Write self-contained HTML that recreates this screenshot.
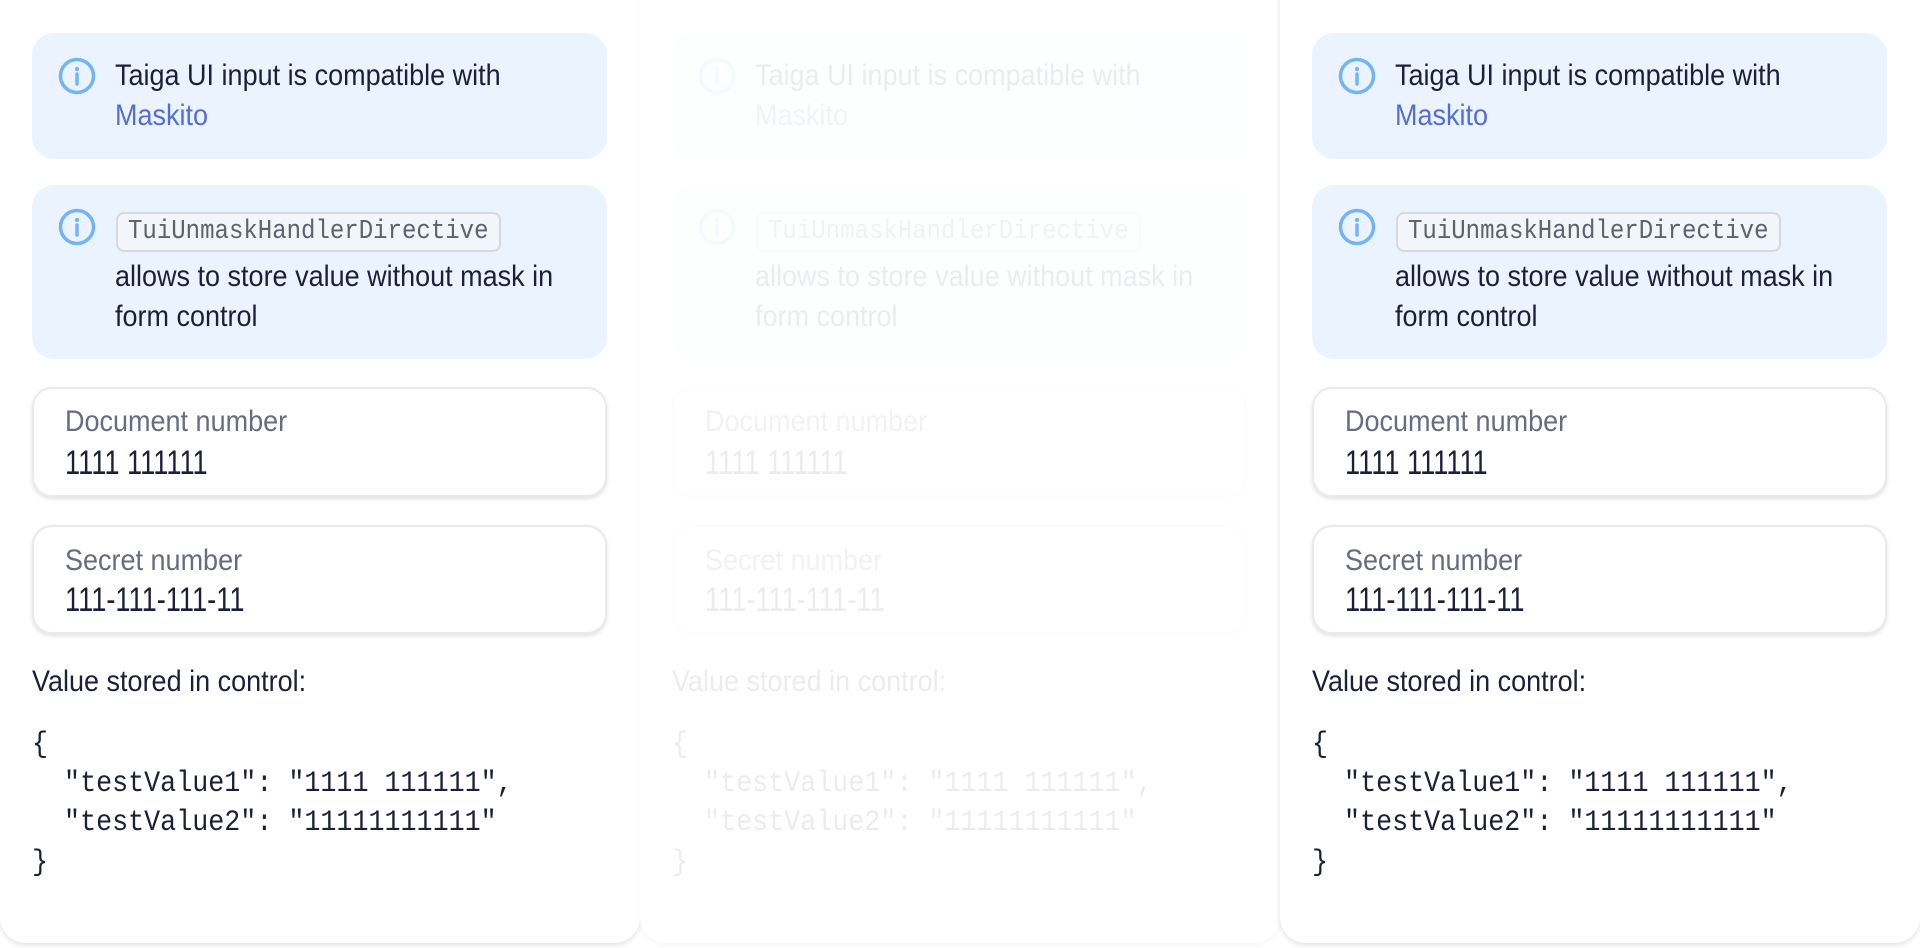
<!DOCTYPE html>
<html><head><meta charset="utf-8"><style>
*{margin:0;padding:0;box-sizing:border-box}
html,body{width:1920px;height:948px;background:#fff;overflow:hidden;font-family:"Liberation Sans",sans-serif;color:#1b1f3b}
.col{position:absolute;top:-30px;width:640px;height:973px;background:#fff;border-radius:26px;box-shadow:0 2px 6px rgba(0,0,0,.12)}
.c{position:absolute;left:0;top:0;width:640px;height:948px}
.n{position:absolute;left:32px;width:575px;background:#ebf4fe;border-radius:22px}
.t{position:absolute;white-space:nowrap;font-size:30px;line-height:40px;height:40px;transform:scaleX(.9);transform-origin:0 50%}
.ic{position:absolute;left:58px;width:38px;height:38px}
.inp{position:absolute;left:32px;width:575px;background:#fff;border:2px solid #e9eaee;border-radius:20px;box-shadow:0 2px 4px rgba(0,0,0,.12)}
.lab{color:#696b80}
.val{font-size:34px;transform:scaleX(.8)}
.m{position:absolute;white-space:pre;font-family:"Liberation Mono",monospace;font-size:30px;line-height:40px;height:40px;transform:scaleX(.89);transform-origin:0 50%}
.chip{position:absolute;left:116px;top:212px;width:385px;height:40px;border:2px solid #d5d9e2;border-radius:8px;background:#f2f5f9}
.chip span{position:absolute;left:10px;top:0;white-space:nowrap;font-family:"Liberation Mono",monospace;font-size:27px;line-height:36px;color:#5d6270;transform:scaleX(.89);transform-origin:0 50%}
a{color:#526ed3;text-decoration:none}
</style></head><body>
<div class="col" style="left:0"></div>
<div class="col" style="left:640px;box-shadow:0 2px 6px rgba(0,0,0,.04)"></div>
<div class="col" style="left:1280px"></div>

<div class="c" style="left:0">
  <div class="n" style="top:33px;height:126px"></div>
  <svg class="ic" style="top:57px" viewBox="0 0 38 38"><circle cx="19" cy="19" r="16.5" fill="none" stroke="#70b6f6" stroke-width="3.5"/><circle cx="19" cy="12" r="2.2" fill="#70b6f6"/><line x1="19" y1="17" x2="19" y2="27" stroke="#70b6f6" stroke-width="3.5" stroke-linecap="round"/></svg>
  <div class="t" style="left:115px;top:56px">Taiga UI input is compatible with</div>
  <div class="t" style="left:115px;top:96px"><a>Maskito</a></div>

  <div class="n" style="top:185px;height:174px"></div>
  <svg class="ic" style="top:208px" viewBox="0 0 38 38"><circle cx="19" cy="19" r="16.5" fill="none" stroke="#70b6f6" stroke-width="3.5"/><circle cx="19" cy="12" r="2.2" fill="#70b6f6"/><line x1="19" y1="17" x2="19" y2="27" stroke="#70b6f6" stroke-width="3.5" stroke-linecap="round"/></svg>
  <div class="chip"><span>TuiUnmaskHandlerDirective</span></div>
  <div class="t" style="left:115px;top:257px">allows to store value without mask in</div>
  <div class="t" style="left:115px;top:297px">form control</div>

  <div class="inp" style="top:387px;height:110px"></div>
  <div class="t lab" style="left:65px;top:402px">Document number</div>
  <div class="t val" style="left:65px;top:443px">1111 111111</div>

  <div class="inp" style="top:525px;height:109px"></div>
  <div class="t lab" style="left:65px;top:541px">Secret number</div>
  <div class="t val" style="left:65px;top:580px">111-111-111-11</div>

  <div class="t" style="left:32px;top:662px">Value stored in control:</div>
  <div class="m" style="left:32px;top:725px">{</div>
  <div class="m" style="left:32px;top:764px">  "testValue1": "1111 111111",</div>
  <div class="m" style="left:32px;top:803px">  "testValue2": "11111111111"</div>
  <div class="m" style="left:32px;top:843px">}</div>
</div>

<div class="c" style="left:640px;opacity:.08">
  <div class="n" style="top:33px;height:126px"></div>
  <svg class="ic" style="top:57px" viewBox="0 0 38 38"><circle cx="19" cy="19" r="16.5" fill="none" stroke="#70b6f6" stroke-width="3.5"/><circle cx="19" cy="12" r="2.2" fill="#70b6f6"/><line x1="19" y1="17" x2="19" y2="27" stroke="#70b6f6" stroke-width="3.5" stroke-linecap="round"/></svg>
  <div class="t" style="left:115px;top:56px">Taiga UI input is compatible with</div>
  <div class="t" style="left:115px;top:96px"><a>Maskito</a></div>
  <div class="n" style="top:185px;height:174px"></div>
  <svg class="ic" style="top:208px" viewBox="0 0 38 38"><circle cx="19" cy="19" r="16.5" fill="none" stroke="#70b6f6" stroke-width="3.5"/><circle cx="19" cy="12" r="2.2" fill="#70b6f6"/><line x1="19" y1="17" x2="19" y2="27" stroke="#70b6f6" stroke-width="3.5" stroke-linecap="round"/></svg>
  <div class="chip"><span>TuiUnmaskHandlerDirective</span></div>
  <div class="t" style="left:115px;top:257px">allows to store value without mask in</div>
  <div class="t" style="left:115px;top:297px">form control</div>
  <div class="inp" style="top:387px;height:110px"></div>
  <div class="t lab" style="left:65px;top:402px">Document number</div>
  <div class="t val" style="left:65px;top:443px">1111 111111</div>
  <div class="inp" style="top:525px;height:109px"></div>
  <div class="t lab" style="left:65px;top:541px">Secret number</div>
  <div class="t val" style="left:65px;top:580px">111-111-111-11</div>
  <div class="t" style="left:32px;top:662px">Value stored in control:</div>
  <div class="m" style="left:32px;top:725px">{</div>
  <div class="m" style="left:32px;top:764px">  "testValue1": "1111 111111",</div>
  <div class="m" style="left:32px;top:803px">  "testValue2": "11111111111"</div>
  <div class="m" style="left:32px;top:843px">}</div>
</div>

<div class="c" style="left:1280px">
  <div class="n" style="top:33px;height:126px"></div>
  <svg class="ic" style="top:57px" viewBox="0 0 38 38"><circle cx="19" cy="19" r="16.5" fill="none" stroke="#70b6f6" stroke-width="3.5"/><circle cx="19" cy="12" r="2.2" fill="#70b6f6"/><line x1="19" y1="17" x2="19" y2="27" stroke="#70b6f6" stroke-width="3.5" stroke-linecap="round"/></svg>
  <div class="t" style="left:115px;top:56px">Taiga UI input is compatible with</div>
  <div class="t" style="left:115px;top:96px"><a>Maskito</a></div>
  <div class="n" style="top:185px;height:174px"></div>
  <svg class="ic" style="top:208px" viewBox="0 0 38 38"><circle cx="19" cy="19" r="16.5" fill="none" stroke="#70b6f6" stroke-width="3.5"/><circle cx="19" cy="12" r="2.2" fill="#70b6f6"/><line x1="19" y1="17" x2="19" y2="27" stroke="#70b6f6" stroke-width="3.5" stroke-linecap="round"/></svg>
  <div class="chip"><span>TuiUnmaskHandlerDirective</span></div>
  <div class="t" style="left:115px;top:257px">allows to store value without mask in</div>
  <div class="t" style="left:115px;top:297px">form control</div>
  <div class="inp" style="top:387px;height:110px"></div>
  <div class="t lab" style="left:65px;top:402px">Document number</div>
  <div class="t val" style="left:65px;top:443px">1111 111111</div>
  <div class="inp" style="top:525px;height:109px"></div>
  <div class="t lab" style="left:65px;top:541px">Secret number</div>
  <div class="t val" style="left:65px;top:580px">111-111-111-11</div>
  <div class="t" style="left:32px;top:662px">Value stored in control:</div>
  <div class="m" style="left:32px;top:725px">{</div>
  <div class="m" style="left:32px;top:764px">  "testValue1": "1111 111111",</div>
  <div class="m" style="left:32px;top:803px">  "testValue2": "11111111111"</div>
  <div class="m" style="left:32px;top:843px">}</div>
</div>
</body></html>
